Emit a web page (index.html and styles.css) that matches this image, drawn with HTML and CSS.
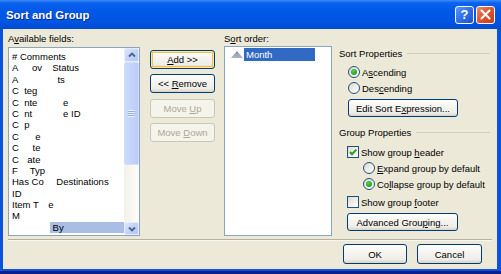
FILE: index.html
```html
<!DOCTYPE html>
<html>
<head>
<meta charset="utf-8">
<title>Sort and Group</title>
<link rel="stylesheet" href="styles.css">
</head>
<body>
<div class="window">
  <div class="titlebar">
    <span class="title">Sort and Group</span>
    <div class="tb-buttons">
      <div class="tb-btn help">?</div>
      <div class="tb-btn close">
        <svg width="11" height="11" viewBox="0 0 11 11"><path d="M1.5 1.5 L9.5 9.5 M9.5 1.5 L1.5 9.5" stroke="#fff" stroke-width="2" stroke-linecap="round"/></svg>
      </div>
    </div>
  </div>
  <div class="client">
    <div class="main">
      <div class="avail">
        <div class="label">A<u>v</u>ailable fields:</div>
        <div class="listbox fields">
          <div class="items">
            <div class="row"># Comments</div>
            <div class="row">A<span class="m">ppr</span>ov<span class="m">al</span> Status</div>
            <div class="row">A<span class="m">ttachmen</span>ts</div>
            <div class="row">C<span class="m">a</span>teg<span class="m">ory</span></div>
            <div class="row">C<span class="m">o</span>nte<span class="m">nt Typ</span>e</div>
            <div class="row">C<span class="m">o</span>nt<span class="m">ent Typ</span>e ID</div>
            <div class="row">C<span class="m">o</span>p<span class="m">y Source</span></div>
            <div class="row">C<span class="m">reat</span>e<span class="m">d</span></div>
            <div class="row">C<span class="m">rea</span>te<span class="m">d By</span></div>
            <div class="row">C<span class="m">re</span>ate<span class="m">d Date</span></div>
            <div class="row">F<span class="m">ile </span>Typ<span class="m">e</span></div>
            <div class="row">Has Co<span class="m">py</span> Destinations</div>
            <div class="row">ID</div>
            <div class="row">Item T<span class="m">yp</span>e</div>
            <div class="row">M<span class="m">odified</span></div>
            <div class="row selected"><span class="m patch">Modified</span> By</div>
          </div>
          <div class="scrollbar">
            <div class="sb-btn">
              <svg width="8" height="6" viewBox="0 0 8 6"><path d="M1 4.5 L4 1.5 L7 4.5" fill="none" stroke="#4D6185" stroke-width="1.8"/></svg>
            </div>
            <div class="sb-thumb">
              <div class="grip"></div>
            </div>
            <div class="sb-track"></div>
            <div class="sb-btn">
              <svg width="8" height="6" viewBox="0 0 8 6"><path d="M1 1.5 L4 4.5 L7 1.5" fill="none" stroke="#4D6185" stroke-width="1.8"/></svg>
            </div>
          </div>
        </div>
      </div>

      <div class="actions">
        <div class="btn default"><span><u>A</u>dd &gt;&gt;</span></div>
        <div class="btn"><span>&lt;&lt; <u>R</u>emove</span></div>
        <div class="btn disabled"><span>Move <u>U</u>p</span></div>
        <div class="btn disabled"><span>Move <u>D</u>own</span></div>
      </div>

      <div class="sortcol">
        <div class="label">S<u>o</u>rt order:</div>
        <div class="listbox sortlist">
          <div class="sort-item">
            <svg class="tri" width="12" height="7" viewBox="0 0 12 7"><defs><linearGradient id="tg" x1="0" y1="0" x2="0" y2="1"><stop offset="0" stop-color="#8593A0"/><stop offset="1" stop-color="#AEB8C1"/></linearGradient></defs><polygon points="6,0 12,7 0,7" fill="url(#tg)"/></svg>
            <span class="hl">Month</span>
          </div>
        </div>
      </div>

      <div class="props">
        <div class="group-title gt-sort"><span>Sort Properties</span></div>
        <div class="opt ind1"><span class="radio checked"></span><span>A<u>s</u>cending</span></div>
        <div class="opt ind1"><span class="radio"></span><span>Des<u>c</u>ending</span></div>
        <div class="btn wide edit"><span>Edit Sort E<u>x</u>pression...</span></div>
        <div class="group-title gt-group"><span>Group Properties</span></div>
        <div class="opt ind0 first-check"><span class="check checked"><svg width="10" height="10" viewBox="0 0 10 10"><path d="M2 5 L4 7.2 L8.3 2.6" fill="none" stroke="#21A121" stroke-width="2"/></svg></span><span>Show group <u>h</u>eader</span></div>
        <div class="opt ind2"><span class="radio"></span><span><u>E</u>xpand group by default</span></div>
        <div class="opt ind2"><span class="radio checked"></span><span>Co<u>l</u>lapse group by default</span></div>
        <div class="opt ind0 footer-check"><span class="check"></span><span>Show group <u>f</u>ooter</span></div>
        <div class="btn wide adv"><span>Advanced Grou<u>p</u>ing...</span></div>
      </div>
    </div>
    <div class="sep"></div>
    <div class="footer">
      <div class="btn ok"><span>OK</span></div>
      <div class="btn cancel"><span>Cancel</span></div>
    </div>
  </div>
</div>
</body>
</html>
```
FILE: styles.css
```css
* { box-sizing: border-box; }
html, body { margin: 0; padding: 0; }
body {
  font-family: "Liberation Sans", Arial, sans-serif;
  font-size: 9.5px;
  color: #000;
  background: #fff;
}
u { text-decoration: underline; text-underline-offset: 1px; }

.window {
  width: 501px;
  height: 274px;
  display: flex;
  flex-direction: column;
  background: #0A53DE;
  border-bottom: 3px solid #0B1F8A;
}

/* Title bar */
.titlebar {
  height: 29px;
  flex: none;
  display: flex;
  align-items: center;
  justify-content: space-between;
  padding: 0 6px 0 6px;
  background: linear-gradient(to bottom, #3C8CF8 0, #0D63EC 10%, #0059E9 35%, #0055E2 75%, #004BD2 100%);
}
.title {
  color: #fff;
  font-weight: bold;
  font-size: 11.4px;
  text-shadow: 1px 1px 0 #0A2A8C;
  padding-top: 1px;
}
.tb-buttons { display: flex; gap: 2px; }
.tb-btn {
  width: 19px;
  height: 18px;
  border: 1px solid #fff;
  border-radius: 3px;
  display: flex;
  align-items: center;
  justify-content: center;
  color: #fff;
  font-weight: bold;
  font-size: 13px;
}
.help { background: linear-gradient(135deg, #5C98F8 0, #2E6BE6 55%, #1E55D0 100%); }
.close { background: linear-gradient(135deg, #EC8A6C 0, #DA5530 50%, #C63C18 100%); }

/* Client area */
.client {
  flex: 1;
  margin: 0 4px 2px 3px;
  background: #ECE9D8;
  padding: 3px 5px 0 5px;
  display: flex;
  flex-direction: column;
}
.main {
  display: flex;
  height: 204px;
}
.label {
  height: 13px;
  line-height: 13px;
  white-space: nowrap;
}

/* Available fields */
.avail {
  width: 132px;
  margin-right: 10px;
  display: flex;
  flex-direction: column;
}
.listbox {
  background: #fff;
  border: 1px solid #8CA4BE;
}
.fields {
  margin-top: 2px;
  height: 189px;
  display: flex;
}
.items {
  flex: 1;
  padding-top: 3px;
  overflow: hidden;
}
.row {
  height: 11.4px;
  line-height: 11.4px;
  padding-left: 3px;
  white-space: nowrap;
}
.m { color: #fff; }
.row.selected { background: #A9BDE5; }
.patch { background: #fff; padding-left: 3px; margin-left: -3px; padding-right: 2px; }

.scrollbar {
  width: 15px;
  display: flex;
  flex-direction: column;
}
.sb-btn {
  height: 14px;
  flex: none;
  border: 1px solid #E4EBFB;
  border-radius: 2px;
  background: linear-gradient(135deg, #DCE6FC 0, #C3D4FA 50%, #B2C7F4 100%);
  display: flex;
  align-items: center;
  justify-content: center;
}
.sb-btn:last-child { height: 13px; }
.sb-thumb {
  height: 103px;
  flex: none;
  border: 1px solid #D2DEFA;
  border-radius: 2px;
  background: linear-gradient(to right, #CCDAFB 0, #C2D3FA 60%, #B9CCF6 100%);
  display: flex;
  align-items: center;
  justify-content: center;
}
.grip {
  width: 7px;
  height: 7px;
  background: repeating-linear-gradient(to bottom, #EEF3FE 0, #EEF3FE 1px, #8FAEEB 1px, #8FAEEB 2px);
}
.sb-track {
  flex: 1;
  background: linear-gradient(to right, #F3F1EB 0, #FDFDFA 100%);
}

/* Action buttons */
.actions {
  width: 65px;
  margin-right: 9px;
  padding-top: 18px;
  display: flex;
  flex-direction: column;
  gap: 5.3px;
}
.btn {
  height: 19px;
  border: 1px solid #003C74;
  border-radius: 3px;
  background: linear-gradient(to bottom, #FFFFFF 0, #F6F5F1 35%, #EEEDE7 80%, #D8D3C8 100%);
  display: flex;
  align-items: center;
  justify-content: center;
  white-space: nowrap;
}
.btn.default {
  box-shadow: inset 0 0 0 1px #FCE7A7, inset 0 0 0 2px #F5BD4D;
}
.btn.disabled {
  border-color: #C9C7BA;
  background: #F5F4EA;
  color: #ACA899;
}

/* Sort order */
.sortcol {
  width: 108px;
  margin-right: 7px;
  display: flex;
  flex-direction: column;
}
.sortlist {
  margin-top: 1px;
  height: 190px;
  padding: 1px 0 0 6px;
}
.sort-item {
  display: flex;
  align-items: center;
  height: 13px;
}
.tri { flex: none; margin-right: 1px; }
.hl {
  width: 71px;
  height: 13px;
  line-height: 13px;
  background: #316AC5;
  color: #fff;
  padding-left: 2px;
}

/* Properties */
.props {
  flex: 1;
  display: flex;
  flex-direction: column;
  padding-top: 14.5px;
  padding-right: 2px;
}
.group-title {
  height: 13px;
  display: flex;
  align-items: center;
  gap: 5px;
  white-space: nowrap;
}
.group-title::after {
  content: "";
  flex: 1;
  border-top: 1px solid #D0D0BF;
}
.gt-sort { margin-bottom: 4.5px; }
.gt-group { margin-top: 8.5px; margin-bottom: 5.5px; }
.opt {
  height: 16px;
  display: flex;
  align-items: center;
  gap: 2px;
  white-space: nowrap;
}
.ind0 { padding-left: 8px; }
.ind1 { padding-left: 9px; }
.ind2 { padding-left: 24px; }
.footer-check { margin-top: 2px; }
.radio {
  width: 12px;
  height: 12px;
  flex: none;
  border-radius: 50%;
  border: 1px solid #1C5180;
  background: linear-gradient(135deg, #DCD9CE 0, #EDEBE4 45%, #FFFFFF 100%);
  display: flex;
  align-items: center;
  justify-content: center;
}
.radio.checked::after {
  content: "";
  width: 6px;
  height: 6px;
  border-radius: 50%;
  background: radial-gradient(circle at 40% 35%, #5BD35B 0, #2AAF2A 50%, #1A8E1A 100%);
}
.check {
  width: 12px;
  height: 12px;
  flex: none;
  border: 1px solid #1C5180;
  background: linear-gradient(135deg, #DCD9CE 0, #EDEBE4 45%, #FFFFFF 100%);
  display: flex;
  align-items: center;
  justify-content: center;
}
.btn.wide { height: 18px; }
.edit { width: 110px; margin-left: 9px; margin-top: 3px; }
.adv { width: 111px; margin-left: 8px; margin-top: 3px; }

/* Separator and footer */
.sep {
  margin-top: 3px;
  border-top: 1px solid #B5B2A4;
  border-bottom: 1px solid #F6F5EE;
}
.footer {
  margin-top: 3px;
  display: flex;
  justify-content: flex-end;
  gap: 10px;
  padding-right: 10px;
}
.btn.ok { width: 64px; height: 20px; }
.btn.cancel { width: 65px; height: 20px; }
```
